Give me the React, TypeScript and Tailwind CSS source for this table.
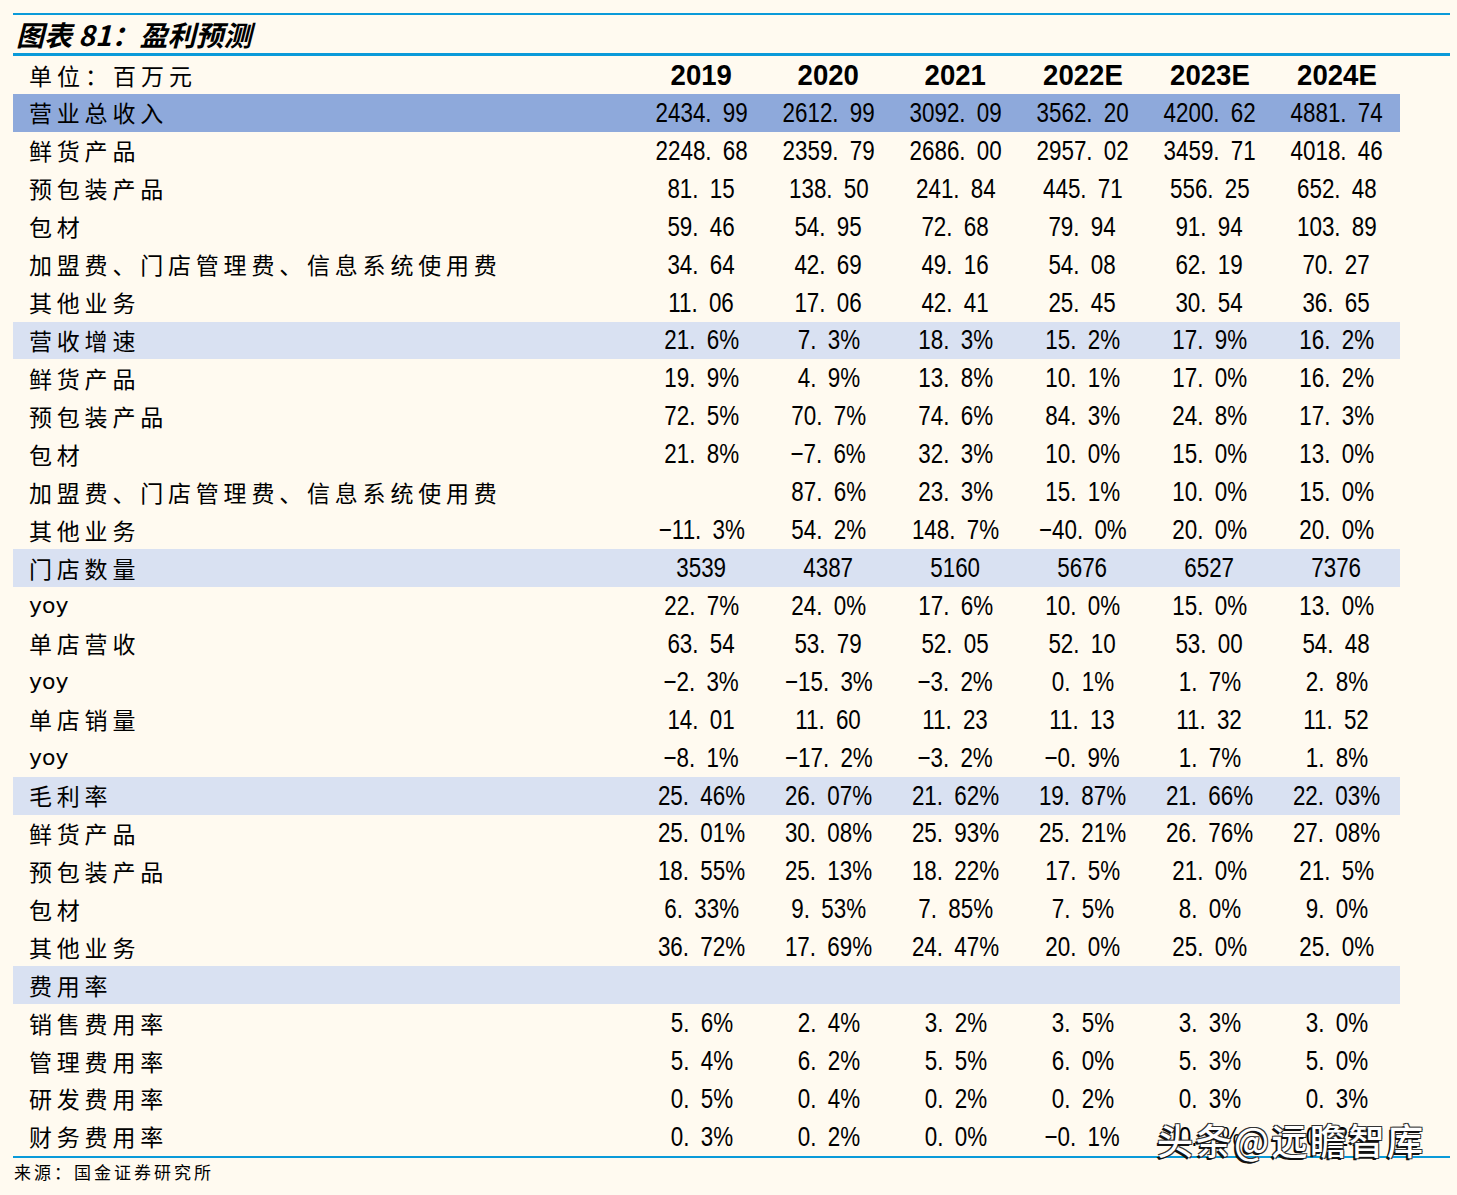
const rows: { label: string; vals: string[]; tone?: 'dark' | 'light' }[] = [
  { label: '营业总收入', vals: ['2434.99', '2612.99', '3092.09', '3562.20', '4200.62', '4881.74'], tone: 'dark' },
  { label: '鲜货产品', vals: ['2248.68', '2359.79', '2686.00', '2957.02', '3459.71', '4018.46'] },
  { label: '预包装产品', vals: ['81.15', '138.50', '241.84', '445.71', '556.25', '652.48'] },
  { label: '包材', vals: ['59.46', '54.95', '72.68', '79.94', '91.94', '103.89'] },
  { label: '加盟费、门店管理费、信息系统使用费', vals: ['34.64', '42.69', '49.16', '54.08', '62.19', '70.27'] },
  { label: '其他业务', vals: ['11.06', '17.06', '42.41', '25.45', '30.54', '36.65'] },
  { label: '营收增速', vals: ['21.6%', '7.3%', '18.3%', '15.2%', '17.9%', '16.2%'], tone: 'light' },
  { label: '鲜货产品', vals: ['19.9%', '4.9%', '13.8%', '10.1%', '17.0%', '16.2%'] },
  { label: '预包装产品', vals: ['72.5%', '70.7%', '74.6%', '84.3%', '24.8%', '17.3%'] },
  { label: '包材', vals: ['21.8%', '−7.6%', '32.3%', '10.0%', '15.0%', '13.0%'] },
  { label: '加盟费、门店管理费、信息系统使用费', vals: ['', '87.6%', '23.3%', '15.1%', '10.0%', '15.0%'] },
  { label: '其他业务', vals: ['−11.3%', '54.2%', '148.7%', '−40.0%', '20.0%', '20.0%'] },
  { label: '门店数量', vals: ['3539', '4387', '5160', '5676', '6527', '7376'], tone: 'light' },
  { label: 'yoy', vals: ['22.7%', '24.0%', '17.6%', '10.0%', '15.0%', '13.0%'] },
  { label: '单店营收', vals: ['63.54', '53.79', '52.05', '52.10', '53.00', '54.48'] },
  { label: 'yoy', vals: ['−2.3%', '−15.3%', '−3.2%', '0.1%', '1.7%', '2.8%'] },
  { label: '单店销量', vals: ['14.01', '11.60', '11.23', '11.13', '11.32', '11.52'] },
  { label: 'yoy', vals: ['−8.1%', '−17.2%', '−3.2%', '−0.9%', '1.7%', '1.8%'] },
  { label: '毛利率', vals: ['25.46%', '26.07%', '21.62%', '19.87%', '21.66%', '22.03%'], tone: 'light' },
  { label: '鲜货产品', vals: ['25.01%', '30.08%', '25.93%', '25.21%', '26.76%', '27.08%'] },
  { label: '预包装产品', vals: ['18.55%', '25.13%', '18.22%', '17.5%', '21.0%', '21.5%'] },
  { label: '包材', vals: ['6.33%', '9.53%', '7.85%', '7.5%', '8.0%', '9.0%'] },
  { label: '其他业务', vals: ['36.72%', '17.69%', '24.47%', '20.0%', '25.0%', '25.0%'] },
  { label: '费用率', vals: ['', '', '', '', '', ''], tone: 'light' },
  { label: '销售费用率', vals: ['5.6%', '2.4%', '3.2%', '3.5%', '3.3%', '3.0%'] },
  { label: '管理费用率', vals: ['5.4%', '6.2%', '5.5%', '6.0%', '5.3%', '5.0%'] },
  { label: '研发费用率', vals: ['0.5%', '0.4%', '0.2%', '0.2%', '0.3%', '0.3%'] },
  { label: '财务费用率', vals: ['0.3%', '0.2%', '0.0%', '−0.1%', '0.2%', '0.2%'] },
];

const years = ['2019', '2020', '2021', '2022E', '2023E', '2024E'];

function Num({ v }: { v: string }) {
  const parts = v.split('.');
  return (
    <span className="inline-block scale-x-[0.8] whitespace-nowrap font-['Liberation_Sans',sans-serif] text-[28px] leading-none text-black">
      {parts[0]}
      {parts.length > 1 && (
        <>
          <span className="mr-[14px]">.</span>
          {parts[1]}
        </>
      )}
    </span>
  );
}

export default function App() {
  return (
    <div className="relative h-[1195px] w-[1457px] overflow-hidden bg-[#fffaf0] pl-[13px] pr-[7px] pt-[13px]">
      <div className="h-[2px] bg-[#0a9ad9]" />
      <div className="flex h-[38px] items-center pl-[3px]">
        <span className="font-['Noto_Sans_CJK_SC',sans-serif] text-[28px] font-bold italic leading-none text-black">
          图表 81：盈利预测
        </span>
      </div>
      <div className="h-[3px] bg-[#0a9ad9]" />

      <div className="grid w-[1387px] grid-cols-[625px_repeat(6,127px)]">
        <div className="flex h-[38px] items-center pl-[16px] font-['Noto_Sans_CJK_SC',sans-serif] text-[23px] leading-none tracking-[5px] text-black">
          单位：百万元
        </div>
        {years.map((y) => (
          <div key={y} className="flex h-[38px] items-center justify-center">
            <span className="inline-block scale-x-[0.95] font-['Liberation_Sans',sans-serif] text-[29px] font-bold leading-none text-black">
              {y}
            </span>
          </div>
        ))}

        {rows.map((r, i) => {
          const bg = r.tone === 'dark' ? 'bg-[#8ea9db]' : r.tone === 'light' ? 'bg-[#d9e1f2]' : '';
          return (
            <div key={i} className={`col-span-7 grid h-[37.93px] grid-cols-[625px_repeat(6,127px)] ${bg}`}>
              <div className="flex items-center pl-[16px]">
                {r.label === 'yoy' ? (
                  <span className="font-['DejaVu_Sans',sans-serif] text-[22px] leading-none text-black">yoy</span>
                ) : (
                  <span className="whitespace-nowrap font-['Noto_Sans_CJK_SC',sans-serif] text-[23px] leading-none tracking-[4.8px] text-black">
                    {r.label}
                  </span>
                )}
              </div>
              {r.vals.map((v, j) => (
                <div key={j} className="flex items-center justify-center">
                  {v && <Num v={v} />}
                </div>
              ))}
            </div>
          );
        })}
      </div>

      <div className="h-[2px] bg-[#0a9ad9]" />
      <div className="flex h-[28px] items-center pl-[1px] font-['Noto_Sans_CJK_SC',sans-serif] text-[17px] tracking-[3px] text-black">
        来源：国金证券研究所
      </div>

      <div className="absolute left-[1157px] top-[1121px] whitespace-nowrap font-['Noto_Sans_CJK_SC',sans-serif] text-[36px] font-medium leading-none tracking-[2.5px] text-white [text-shadow:-2px_2px_0_#111,-1px_-1px_0_#333,1px_-1px_0_#333,1px_1px_0_#333]">
        头条@远瞻智库
      </div>
    </div>
  );
}
